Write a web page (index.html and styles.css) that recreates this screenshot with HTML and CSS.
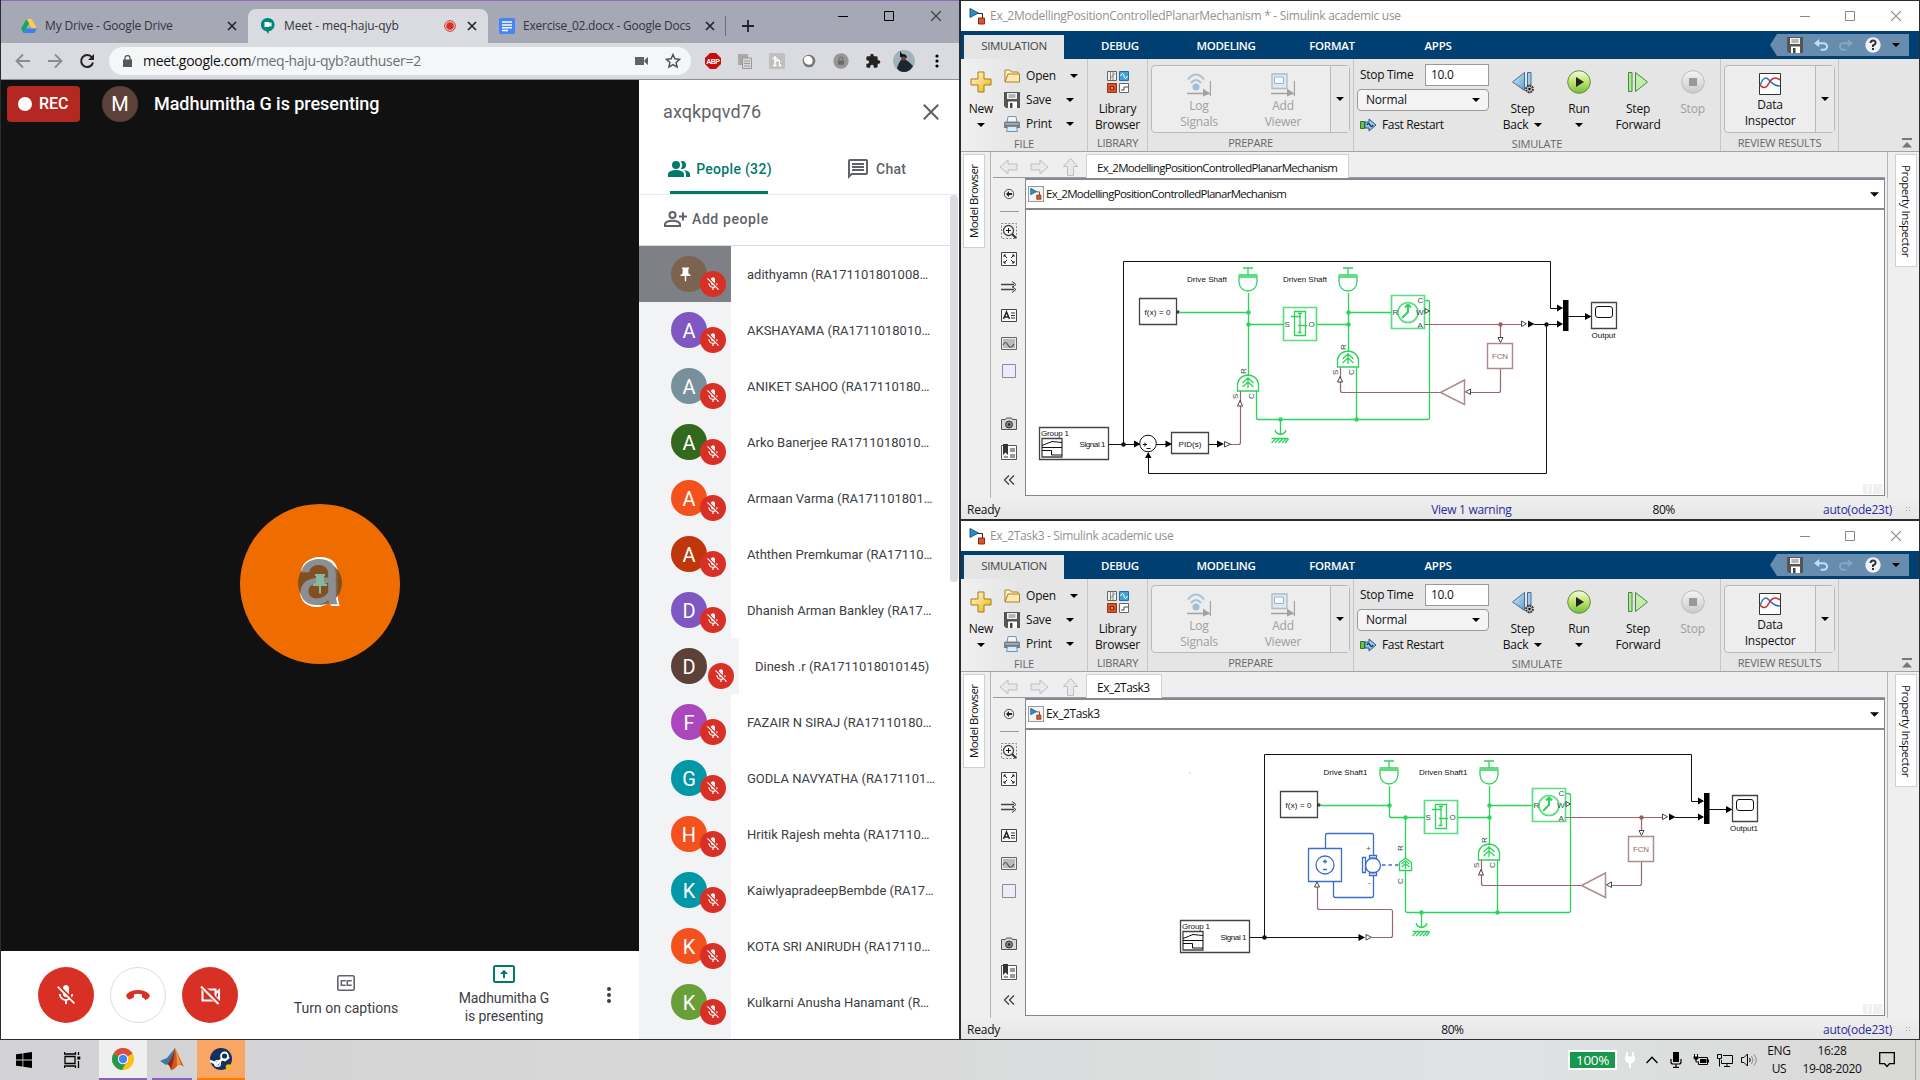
FILE: index.html
```html
<!DOCTYPE html>
<html lang="en">
<head>
<meta charset="utf-8">
<title>Desktop</title>
<link rel="stylesheet" href="styles.css">
</head>
<body>
<svg class="defs" width="0" height="0">
  <defs>
    <linearGradient id="gold" x1="0" y1="0" x2="1" y2="1"><stop offset="0" stop-color="#fffbe0"/><stop offset="1" stop-color="#eab308"/></linearGradient>
    <linearGradient id="green" x1="0" y1="0" x2="0" y2="1"><stop offset="0" stop-color="#f4fbe6"/><stop offset=".45" stop-color="#c5e774"/><stop offset="1" stop-color="#72bb3c"/></linearGradient>
    <linearGradient id="blue" x1="0" y1="0" x2="1" y2="1"><stop offset="0" stop-color="#d8effc"/><stop offset="1" stop-color="#5a9fd0"/></linearGradient>
    <linearGradient id="grey" x1="0" y1="0" x2="0" y2="1"><stop offset="0" stop-color="#f6f6f6"/><stop offset="1" stop-color="#c9c9c9"/></linearGradient>
  </defs>
  <symbol id="x" viewBox="0 0 10 10"><path d="M1 1l8 8M9 1l-8 8" fill="none" stroke="currentColor" stroke-width="var(--sw,1)"/></symbol>
  <symbol id="caret" viewBox="0 0 8 4"><path d="M0 0h8L4 4z"/></symbol>
  <symbol id="micoff" viewBox="0 0 24 24"><path fill="currentColor" d="M19 11h-1.700c0 .74-.16 1.430-.43 2.050l1.230 1.230c.56-.98.9-2.090.9-3.280zm-4.020.17c0-.06.02-.11.02-.17V5c0-1.660-1.340-3-3-3S9 3.340 9 5v.18l5.980 5.990zM4.270 3L3 4.270l6.010 6.010V11c0 1.660 1.330 3 2.990 3 .22 0 .44-.03.65-.08l1.660 1.660c-.71.33-1.500.52-2.310.52-2.760 0-5.300-2.100-5.300-5.100H5c0 3.410 2.720 6.230 6 6.720V21h2v-3.280c.91-.13 1.770-.45 2.540-.9L19.730 21 21 19.730 4.270 3z"/></symbol>
  <symbol id="pin" viewBox="0 0 24 24"><path fill="currentColor" d="M16 9V4h1V2H7v2h1v5c0 1.700-1.300 3-3 3v2h6v7l1 1 1-1v-7h6v-2c-1.700 0-3-1.300-3-3z"/></symbol>
  <symbol id="simulink" viewBox="0 0 17 17"><path d="M1 .5v9L9.500 5z" fill="#2b8cc4" stroke="#1c5f8c"/><path d="M9 5.500h4.500V10" fill="none" stroke="#222"/><path d="M9.500 10h6v6h-6z" fill="#d9532c" stroke="#8c2b10"/></symbol>
  <symbol id="plus" viewBox="0 0 22 22"><path d="M8 1h6v7h7v6h-7v7H8v-7H1V8h7z" fill="url(#gold)" stroke="#a87b14"/></symbol>
  <symbol id="folder" viewBox="0 0 16 14"><path d="M1 13V1h5l1.500 2H14v2" fill="#fff3c4" stroke="#a8822c"/><path d="M1 13L4 5h11.500v8z" fill="#fbe9ae" stroke="#a8822c"/></symbol>
  <symbol id="floppy" viewBox="0 0 16 16"><path d="M0 0h16v16H2l-2-2z" fill="#555"/><path d="M3 1h10v6H3z" fill="#f4f4f4"/><path d="M4.500 3h7M4.500 5h7" stroke="#777"/><path d="M4 9.500h9V16H4z" fill="#fff"/><path d="M6 11h2.500v5H6z" fill="#444"/></symbol>
  <symbol id="printer" viewBox="0 0 16 16"><path d="M4 .5h8l1 6H3z" fill="#eef6fc" stroke="#7c98ae"/><path d="M0 6.500q0-1 2-1h12q2 0 2 1V12H0z" fill="#777c83"/><path d="M1 8h14" stroke="#c9cdd2"/><path d="M3.500 10.500h9l1 5h-11z" fill="#d9ecf8" stroke="#6f93ae"/></symbol>
  <symbol id="library" viewBox="0 0 22 22"><path d="M.5.500h9v9h-9z" fill="#eee" stroke="#666"/><path d="M3.500 1v8M6 1v8M3 8l5-6" stroke="#888"/><path d="M12.500.5h9v9h-9z" fill="#3fa3db" stroke="#1d6fa5"/><path d="M13.500 5q2-5 3.500 0t3.500 0" fill="none" stroke="#fff"/><path d="M.5 12.500h9v9h-9z" fill="#d9532c" stroke="#9c3312"/><path d="M3.500 15.500h3v3h-3z" fill="#f0a080" stroke="#7c2408"/><path d="M12.500 12.500h9v9h-9z" fill="#fff" stroke="#666"/><path d="M14 19h3v-3h4" fill="none" stroke="#444"/></symbol>
  <symbol id="logsig" viewBox="0 0 24 24"><path d="M1 6.500Q9-3.500 17 6.500M4 10q5-6 10 0" fill="none" stroke="#a9c2d6" stroke-width="2.200"/><circle cx="9" cy="14" r="3.500" fill="#a3bdd3"/><path d="M0 20.500h23M23.500 8v15" stroke="#a2a2a2" stroke-width="1.300"/><path d="M16 15.500v8l7-3z" fill="#a2a2a2"/></symbol>
  <symbol id="viewer" viewBox="0 0 24 24"><path d="M1 1h15v14.500H1z" fill="#dfe8f0" stroke="#a9bccc" stroke-width="1.300"/><path d="M3.500 4h9v6.500h-9z" fill="#f4f8fb" stroke="#9cb2c6"/><path d="M0 20.500h23M23.500 8v15" stroke="#a2a2a2" stroke-width="1.300"/><path d="M16 15.500v8l7-3z" fill="#a2a2a2"/></symbol>
  <symbol id="restart" viewBox="0 0 17 14"><path d="M.5 3.500h4v7h-4z" fill="#6fbf4a" stroke="#38701c"/><path d="M5 4h4V1l7 6-7 6v-3H5z" fill="#9cc8e8" stroke="#225a86"/><path d="M7 7q1.500-3 3 0t3 0" fill="none" stroke="#123f66" stroke-width="1.500"/></symbol>
  <symbol id="stepback" viewBox="0 0 24 24"><path d="M13.500 2.500v18L1.500 12z" fill="url(#blue)" stroke="#4a6d8c"/><path d="M16.500 2.500h3.500v13h-3.500z" fill="#9ccdf0" stroke="#4a6d8c"/><circle cx="18.500" cy="19" r="3.400" fill="#ccc" stroke="#333" stroke-width="2" stroke-dasharray="1.800 .8"/><circle cx="18.500" cy="19" r="1.200"/></symbol>
  <symbol id="run" viewBox="0 0 24 24"><circle cx="12" cy="12" r="11.300" fill="url(#green)" stroke="#5f8f3e"/><path d="M9 7v10l8-5z" fill="#222"/></symbol>
  <symbol id="stepfwd" viewBox="0 0 24 24"><path d="M2.500 2.500h3.500v19H2.500z" fill="#b9e59a" stroke="#3f8a3a"/><path d="M9.500 2.500v19L21.500 12z" fill="#c3ebaa" stroke="#3f8a3a"/></symbol>
  <symbol id="stop" viewBox="0 0 24 24"><circle cx="12" cy="12" r="11.300" fill="url(#grey)" stroke="#bdbdbd"/><path d="M8 8h8v8H8z" fill="#999"/></symbol>
  <symbol id="inspector" viewBox="0 0 22 22"><path d="M.5.500h21v21H.5z" fill="#fdfdfd" stroke="#333"/><path d="M1 13q4-12 9-6t11 6" fill="none" stroke="#2b74b8" stroke-width="1.500"/><path d="M1 12q5 6 9-2t11-3" fill="none" stroke="#c8322c" stroke-width="1.500"/></symbol>
  <symbol id="undo" viewBox="0 0 16 14"><path d="M4 4.500h6.500a3.500 3.500 0 010 7H7" fill="none" stroke="currentColor" stroke-width="2.200"/><path d="M0 4.500L5.500 0v9z" fill="currentColor"/></symbol>
  <symbol id="help" viewBox="0 0 16 16"><circle cx="8" cy="8" r="7.700" fill="#eef2f6"/><path d="M5.500 6q0-2.500 2.600-2.500T10.600 6Q10.600 7.300 8 8.500V10M8 11v2" fill="none" stroke="#333" stroke-width="2"/></symbol>
  <symbol id="navarrow" viewBox="0 0 19 16"><path d="M1 8l8-7v4h9v6H9v4z" fill="#e9e9e9" stroke="#bdbdbd"/></symbol>

  <symbol id="p-back" viewBox="0 0 16 16"><circle cx="8" cy="8" r="4.700" fill="#eee" stroke="#555"/><path d="M5 8l3-3v2h3v2H8v2z" fill="#222"/></symbol>
  <symbol id="p-zoom" viewBox="0 0 16 16"><path d="M.5.500h15v15H.5z" fill="none" stroke="#888" stroke-dasharray="2 1.500"/><circle cx="7.500" cy="7.500" r="5" fill="#f8f8f8" stroke="#444" stroke-width="1.300"/><path d="M11 11l4 4" stroke="#333" stroke-width="2"/><path d="M5 7.500h5M7.500 5v5" stroke="#111"/></symbol>
  <symbol id="p-fit" viewBox="0 0 16 16"><path d="M.5 1.500h15v13H.5z" fill="#fafafa" stroke="#444"/><path d="M3 6V4h2M3 4l3 3M13 6V4h-2M13 4l-3 3M3 10v2h2M3 12l3-3M13 10v2h-2M13 12l-3-3" fill="none" stroke="#222"/></symbol>
  <symbol id="p-arrows" viewBox="0 0 16 16"><path d="M0 5.500h13M0 10.500h13" stroke="#444" stroke-width="1.300"/><path d="M11 2.500l4 3-4 3M11 7.500l4 3-4 3" fill="none" stroke="#444"/></symbol>
  <symbol id="p-note" viewBox="0 0 16 16"><path d="M.5 2.500h15v12H.5z" fill="#fafafa" stroke="#444"/><path d="M10 6h4M10 8.500h4M10 11h4" stroke="#333"/><path d="M2.500 12L5.500 5l3 7M3.500 10h4" fill="none" stroke="#222" stroke-width="1.500"/></symbol>
  <symbol id="p-image" viewBox="0 0 16 16"><path d="M.5 2.500h15v12H.5z" fill="#eee" stroke="#666"/><path d="M2 4h12v9H2z" fill="#bbb"/><path d="M2 10q2.500-5 5 0t6-1" fill="none" stroke="#555" stroke-width="1.200"/></symbol>
  <symbol id="p-area" viewBox="0 0 16 16"><path d="M1.500 1.500h13v13h-13z" fill="#ebebfa" stroke="#8a8aa0"/></symbol>
  <symbol id="p-camera" viewBox="0 0 16 16"><path d="M.5 3.500h4l1-1.500h5l1 1.500h4v10H.5z" fill="#d8d8d8" stroke="#555"/><circle cx="8" cy="8.500" r="3.500" fill="#888" stroke="#333"/><circle cx="8" cy="8.500" r="1.300" fill="#222"/></symbol>
  <symbol id="p-book" viewBox="0 0 16 16"><path d="M.5 1.500h15v14H.5z" fill="#fafafa" stroke="#555"/><path d="M2 0h5v11L4.500 8.500 2 11z" fill="#333"/><path d="M9 4h5v4H9zM9 10h5v4H9zM3 12h4v2H3z" fill="#999"/></symbol>
  <symbol id="p-collapse" viewBox="0 0 16 16"><path d="M8 3.500L3.500 8 8 12.500M13 3.500L8.500 8l4.500 4.500" fill="none" stroke="#444" stroke-width="1.300"/></symbol>

  <!-- blocks and wires that both models share -->
  <symbol id="shaft" viewBox="0 0 24 28" overflow="visible"><path class="g" d="M7 1.500h10M12 1.500v7M2.500 8.500h19M3 10.500h18v5q-1 8.500-9 9-8-.5-9-9z"/></symbol>
  <symbol id="source" viewBox="0 0 24 20" overflow="visible"><path class="g" d="M1.500 16.500h21V9q-2-8-10.500-8.500Q3.500 1 1.500 9zM12 13.500V4M6.500 8.500l5.500-5 5.500 5M6.500 12.500l5.500-5 5.500 5"/></symbol>
  <symbol id="common" overflow="visible">
    <path class="k" d="M1108.500 444.500H1123.500V261.500H1550.500V308.500H1557M1568 316.500H1586M1534 324.500H1558"/>
    <path class="kf" d="M1557 304.500v7l6-3.500zM1557 320.500v7l6-3.500zM1585 313v7l6.500-3.500zM1528 320.500v7l6.500-3.500zM1563 300h5.500v31h-5.500z"/>
    <circle cx="1123.500" cy="444.500" r="2.300"/>
    <path class="b" d="M1039.500 427.500h69v32h-69zM1042 438.500h20v18.500h-20z"/>
    <path class="k" d="M1042 445.500l10-4 10 1M1042 447.500h20M1042 450.500h9.500v4.500h10.500"/>
    <path class="b" d="M1139.500 298.500h37v26h-37zM1591.500 302.500h25v26h-25z"/>
    <rect class="k" x="1595.500" y="306.500" width="17" height="11" rx="2.500"/>
    <path class="k" d="M1177 311h2v2h-2z"/>
    <text x="1041" y="436" textLength="28">Group 1</text>
    <text x="1079.500" y="446.500" textLength="26">Signal 1</text>
    <text x="1144.500" y="315" textLength="26">f(x) = 0</text>
    <path class="g" d="M1179 312.500H1248.500M1316.500 324.500H1348.500M1348.500 293V351M1348.500 312.500H1392M1356.500 367.500V419.500M1280.500 419.500H1427.500q2 0 2-2V302.500q0-2-2-2H1424.500M1280.500 419.500V434.500M1275 430q1 4 5.500 4.500 4.500-.5 5.500-4.500M1271.500 438.500h17M1271.500 443l4-4M1275 443l4-4M1278.500 443l4-4M1282 443l4-4M1285 443l3.500-4"/>
    <path class="gb" d="M1283.500 307.500h33v33h-33zM1391.500 295.500h33v33h-33z"/>
    <path class="g" d="M1294.500 311.500h11v24h-11zM1291 316.500h10M1298 325.500h9M1298 313.500h4M1300 313.500v19M1297.500 332.500h4"/>
    <circle class="gb" cx="1408" cy="312.500" r="10"/>
    <path class="g thick" d="M1402 318l6-6v-8M1405 307.500l3-3 3 3"/>
    <g class="gf"><circle cx="1248.500" cy="312.500" r="2.200"/><circle cx="1348.500" cy="312.500" r="2.200"/><circle cx="1348.500" cy="324.500" r="2.200"/><circle cx="1280.500" cy="419.500" r="2.200"/><circle cx="1356.500" cy="419.500" r="2.200"/></g>
    <use href="#shaft" x="1236" y="266.500" width="24" height="28"/>
    <use href="#shaft" x="1336" y="266.500" width="24" height="28"/>
    <use href="#source" x="1336" y="350.500" width="24" height="20"/>
    <g class="t"><text x="1284.500" y="327">S</text><text x="1308.500" y="327">O</text><text x="1392.500" y="315">R</text><text x="1417.500" y="303">C</text><text x="1416" y="315">W</text><text x="1417.500" y="327.500">A</text>
    <text transform="translate(1346 350) rotate(-90)">R</text><text transform="translate(1338 375) rotate(-90)">S</text><text transform="translate(1353.500 375) rotate(-90)">C</text></g>
    <path class="m" d="M1424.500 324.500H1521M1500.500 324.500V338M1500.500 368V390.500q0 2-2 2H1470M1440 392.500H1342.500q-2 0-2-2V367.500"/>
    <path class="mb" d="M1487.500 343.500h25v25h-25zM1464.500 380l-24 12.500 24 12z"/>
    <circle cx="1500.500" cy="324.500" r="2.200" fill="#9a5f63"/>
    <text class="fcn" x="1492" y="359" textLength="16">FCN</text>
    <path class="o" d="M1425 308.500v5l4.500-2.500zM1521.500 321v5.500l5-2.700zM1498 337.500h5l-2.500 5zM1470.500 389v5.500l-5-2.700zM1337.500 382h5l-2.500-5.500z"/>
  </symbol>
</svg>

<main class="desktop">
<div class="windows">

<section class="chrome">
  <header class="tabstrip">
    <div class="tab t1"><svg width="16" height="15" viewBox="0 0 16 15"><path d="M5.500 0h5l5.500 9.500h-5z" fill="#ffcf48"/><path d="M5.500 0L0 9.500 2.600 14 8 4.500z" fill="#11a861"/><path d="M5.200 9.500H16L13.400 14H2.600z" fill="#3c7ff0"/></svg><span>My Drive - Google Drive</span><svg class="close" width="10" height="10"><use href="#x"/></svg></div>
    <div class="tab t2"><svg width="14" height="16" viewBox="0 0 14 16"><path d="M7 0a6.700 6.700 0 011 13.300L7 16l-1.500-2.700A6.700 6.700 0 017 0z" fill="#00897b"/><path d="M3.500 4h5v1.500l2-1.200v4.500l-2-1.200V9h-5z" fill="#fff"/></svg><span>Meet - meq-haju-qyb</span><svg class="rec" width="12" height="12"><circle cx="6" cy="6" r="5.300" fill="none" stroke="#d93025"/><circle cx="6" cy="6" r="3.800" fill="#d93025"/></svg><svg class="close" width="10" height="10"><use href="#x"/></svg></div>
    <div class="tab t3"><svg width="16" height="16" viewBox="0 0 16 16"><rect width="16" height="16" rx="1.500" fill="#4285f4"/><path d="M3 4h10M3 7h10M3 9.800h10M3 12.500h6" stroke="#fff" stroke-width="1.500"/></svg><span>Exercise_02.docx - Google Docs</span><svg class="close" width="10" height="10"><use href="#x"/></svg></div>
    <svg class="newtab" width="12" height="12" viewBox="0 0 12 12"><path d="M0 6h12M6 0v12" stroke="#222" stroke-width="1.800"/></svg>
    <div class="winbtns"><svg width="10" height="10"><path d="M0 5.500h10" stroke="#000"/></svg><svg width="10" height="10"><path d="M.5.500h9v9h-9z" fill="none" stroke="#000"/></svg><svg width="12" height="12"><use href="#x"/></svg></div>
  </header>
  <div class="toolbar">
    <svg width="16" height="16" viewBox="0 0 16 16"><path d="M15 8H2M8 1.500L1.500 8 8 14.500" fill="none" stroke="#8b8c91" stroke-width="1.800"/></svg>
    <svg width="16" height="16" viewBox="0 0 16 16"><path d="M1 8h13M8 1.500L14.500 8 8 14.500" fill="none" stroke="#8b8c91" stroke-width="1.800"/></svg>
    <svg width="16" height="16" viewBox="0 0 16 16"><path d="M13 4.500A6 6 0 1014 9.500" fill="none" stroke="#222" stroke-width="2"/><path d="M15 1v6H9z" fill="#222"/></svg>
    <div class="omnibox"><svg width="9" height="12" viewBox="0 0 9 12"><path d="M0 4.500h9V12H0z" fill="#55585c"/><path d="M2 5V3a2.500 2.500 0 015 0v2" fill="none" stroke="#55585c" stroke-width="1.300"/></svg><span class="url">meet.google.com<i>/meq-haju-qyb?authuser=2</i></span>
      <svg width="13" height="10" viewBox="0 0 13 10"><path d="M0 1h9v8H0zM9.500 4L13 1v8L9.500 6z" fill="#5f6368"/></svg>
      <svg class="star" width="16" height="16" viewBox="0 0 16 16"><path d="M8 1.500l1.900 4.300 4.700.5-3.500 3.100 1 4.600L8 11.600 3.900 14l1-4.600L1.400 6.300l4.700-.5z" fill="none" stroke="#4a4d51" stroke-width="1.400"/></svg></div>
    <div class="exts">
      <svg width="16" height="16" viewBox="0 0 16 16"><path d="M5 0h6l5 5v6l-5 5H5l-5-5V5z" fill="#c70d0d"/><text x="1.200" y="10.800" textLength="13.600" class="abp">ABP</text></svg>
      <svg width="16" height="16" viewBox="0 0 16 16"><path d="M1 1h10v11H1z" fill="#aaa"/><path d="M5.500 5h9v10.500h-9z" fill="#d8d8da" stroke="#999"/><path d="M7 8h6M7 10.500h6M7 13h6" stroke="#999"/></svg>
      <svg width="16" height="16" viewBox="0 0 16 16"><rect width="16" height="16" rx="1.500" fill="#bfbfbf"/><path d="M6 3v9.500M4 12.500h3.500M3.500 5.500h5M6 9q4.500-4 4.500 0v3.500h2" fill="none" stroke="#fff" stroke-width="1.400"/></svg>
      <svg width="16" height="16" viewBox="0 0 16 16"><circle cx="8" cy="8" r="5" fill="#f6f6f6" stroke="#777" stroke-width="2.600"/><circle cx="7" cy="7" r="4" fill="#fff"/></svg>
      <svg width="16" height="16" viewBox="0 0 16 16"><circle cx="8" cy="8" r="7.700" fill="#969696"/><path d="M5 7.500h6v4.200H5z" fill="#6a6a6a"/><path d="M6.200 7.500V5.800a1.800 1.800 0 013.600 0v1.700" fill="none" stroke="#6a6a6a"/></svg>
      <svg width="16" height="16" viewBox="0 0 24 24"><path d="M20.500 11H19V7a2 2 0 00-2-2h-4V3.500a2.500 2.500 0 00-5 0V5H4a2 2 0 00-2 2v3.800h1.500a2.700 2.700 0 010 5.400H2V20a2 2 0 002 2h3.800v-1.500a2.700 2.700 0 015.400 0V22H17a2 2 0 002-2v-4h1.500a2.500 2.500 0 000-5z" fill="#222"/></svg>
      <svg width="22" height="22" viewBox="0 0 22 22"><circle cx="11" cy="11" r="11" fill="#9fb3bb"/><path d="M6 13l2-3h5l3 2 4 4q-3.500 6-9 6-5 0-7-4z" fill="#1d2433"/><circle cx="10.500" cy="8" r="2.500" fill="#6b4637"/><path d="M7 7V1l2 3q5 0 5 4l-3-1.500z" fill="#111"/></svg>
      <svg width="4" height="14" viewBox="0 0 4 14"><circle cx="2" cy="2" r="1.600"/><circle cx="2" cy="7" r="1.600"/><circle cx="2" cy="12" r="1.600"/></svg>
    </div>
  </div>
  <div class="meet">
    <div class="stage">
      <div class="video">
        <div class="caption"><div class="recbadge"><b></b>REC</div><div class="initial">M</div><span>Madhumitha G is presenting</span></div>
        <div class="bigavatar"><span class="letter">a</span><span class="shade"></span><span class="letter over">a</span><svg class="bigpin" width="14" height="20" viewBox="5 2 14 20" preserveAspectRatio="none"><use href="#pin" width="24" height="24"/></svg></div>
      </div>
      <div class="controls">
        <div class="round red"><svg width="24" height="24"><use href="#micoff"/></svg></div>
        <div class="round hang"><svg width="24" height="10" viewBox="0 0 24 10"><path d="M12 0C5 0 .5 3.500.2 5.500 0 7 2.500 9.500 3.500 9.500S8 7.500 8 6.800V4.300Q12 3 16 4.300v2.500c0 .7 3.500 2.700 4.500 2.700S24 7 23.800 5.500C23.500 3.500 19 0 12 0z" fill="#d93025"/></svg></div>
        <div class="round red"><svg width="24" height="24" viewBox="0 0 24 24"><path d="M4.500 6.500v11h13v-11zM17.500 10.500L21 7.500v9l-3.500-3" fill="none" stroke="#fff" stroke-width="2"/><path d="M4 3.500l17 17" stroke="#d93025" stroke-width="5"/><path d="M3 3.500l17.500 17.500" stroke="#fff" stroke-width="2"/></svg></div>
        <div class="action cc"><svg width="18" height="16" viewBox="0 0 18 16"><rect x=".8" y=".8" width="16.400" height="14.400" rx="1.500" fill="none" stroke="#5f6368" stroke-width="1.600"/><path d="M8 6.500V5.700H4.300v4.600H8v-.8M14 6.500V5.700h-3.700v4.600H14v-.8" fill="none" stroke="#5f6368" stroke-width="1.500"/></svg><span>Turn on captions</span></div>
        <div class="action pr"><svg width="22" height="18" viewBox="0 0 22 18"><rect x="1" y="1" width="20" height="16" rx="1.500" fill="none" stroke="#00796b" stroke-width="2"/><path d="M11 13V7" stroke="#00796b" stroke-width="2"/><path d="M7 9l4-4.300L15 9z" fill="#00796b"/></svg><span>Madhumitha G<br>is presenting</span></div>
        <svg class="more" width="4" height="16" viewBox="0 0 4 16"><circle cx="2" cy="2" r="2"/><circle cx="2" cy="8" r="2"/><circle cx="2" cy="14" r="2"/></svg>
      </div>
    </div>
    <aside class="panel">
      <div class="ptitle"><span>axqkpqvd76</span><svg width="18" height="18"><use href="#x"/></svg></div>
      <div class="ptabs">
        <div class="pt on"><svg width="22" height="16" viewBox="1 4 22 16"><path d="M16.700 13.100c1.400 1 2.300 2.200 2.300 3.900v3h4v-3c0-2.200-3.600-3.500-6.300-3.900zM15 12a4 4 0 000-8c-.5 0-.9.100-1.300.2a6 6 0 010 7.600c.4.100.8.200 1.300.2zM9 4a4 4 0 100 8 4 4 0 000-8zm0 9c-2.700 0-8 1.300-8 4v3h16v-3c0-2.700-5.300-4-8-4z" fill="#00796b"/></svg>People (32)</div>
        <div class="pt chat"><svg width="20" height="20" viewBox="2 2 20 20"><path d="M4 4h16v12H5.200L4 17.200zM4 2a2 2 0 00-2 2v18l4-4h14a2 2 0 002-2V4a2 2 0 00-2-2zM6 12h12v2H6zm0-3h12v2H6zm0-3h12v2H6z" fill="#5f6368" fill-rule="evenodd"/></svg>Chat</div>
      </div>
      <div class="add"><svg width="23" height="16" viewBox="0 0 23 16"><circle cx="8.500" cy="4" r="3" fill="none" stroke="#5f6368" stroke-width="2"/><path d="M1 15v-2q1-3.200 7.500-3.200T16 13v2zM15 5.500h8M19 1.500v8" fill="none" stroke="#5f6368" stroke-width="2"/></svg>Add people</div>
      <ul class="people">
        <li class="pinned"><b class="c0"><svg width="17" height="17"><use href="#pin"/></svg></b><i><svg width="16" height="16"><use href="#micoff"/></svg></i><span>adithyamn (RA171101801008…</span></li>
        <li><b class="violet">A</b><i><svg width="16" height="16"><use href="#micoff"/></svg></i><span>AKSHAYAMA (RA1711018010…</span></li>
        <li><b class="slate">A</b><i><svg width="16" height="16"><use href="#micoff"/></svg></i><span>ANIKET SAHOO (RA17110180…</span></li>
        <li><b class="forest">A</b><i><svg width="16" height="16"><use href="#micoff"/></svg></i><span>Arko Banerjee RA1711018010…</span></li>
        <li><b class="orange">A</b><i><svg width="16" height="16"><use href="#micoff"/></svg></i><span>Armaan Varma (RA171101801…</span></li>
        <li><b class="rust">A</b><i><svg width="16" height="16"><use href="#micoff"/></svg></i><span>Aththen Premkumar (RA17110…</span></li>
        <li><b class="violet">D</b><i><svg width="16" height="16"><use href="#micoff"/></svg></i><span>Dhanish Arman Bankley (RA17…</span></li>
        <li class="wide"><b class="brown">D</b><i><svg width="16" height="16"><use href="#micoff"/></svg></i><span>Dinesh .r (RA1711018010145)</span></li>
        <li><b class="purple">F</b><i><svg width="16" height="16"><use href="#micoff"/></svg></i><span>FAZAIR N SIRAJ (RA17110180…</span></li>
        <li><b class="teal">G</b><i><svg width="16" height="16"><use href="#micoff"/></svg></i><span>GODLA NAVYATHA (RA171101…</span></li>
        <li><b class="orange">H</b><i><svg width="16" height="16"><use href="#micoff"/></svg></i><span>Hritik Rajesh mehta (RA17110…</span></li>
        <li><b class="teal">K</b><i><svg width="16" height="16"><use href="#micoff"/></svg></i><span>KaiwlyapradeepBembde (RA17…</span></li>
        <li><b class="orange">K</b><i><svg width="16" height="16"><use href="#micoff"/></svg></i><span>KOTA SRI ANIRUDH (RA17110…</span></li>
        <li><b class="lime">K</b><i><svg width="16" height="16"><use href="#micoff"/></svg></i><span>Kulkarni Anusha Hanamant (R…</span></li>
      </ul>
      <div class="thumb"></div>
    </aside>
  </div>
</section>

<div class="models">
<section class="sim">
  <header class="title"><svg width="17" height="17"><use href="#simulink"/></svg><span>Ex_2ModellingPositionControlledPlanarMechanism * - Simulink academic use</span><div class="simbtns"><svg width="10" height="10"><path d="M0 5.500h10" stroke="#888"/></svg><svg width="10" height="10"><path d="M.5.500h9v9h-9z" fill="none" stroke="#888"/></svg><svg width="12" height="12"><use href="#x"/></svg></div></header>
  <nav class="ribbon"><a class="on">SIMULATION</a><a>DEBUG</a><a>MODELING</a><a>FORMAT</a><a>APPS</a><div class="quick"><svg width="16" height="16"><use href="#floppy"/></svg><svg class="un" width="15" height="13"><use href="#undo"/></svg><svg class="re" width="15" height="13"><use href="#undo"/></svg><svg width="16" height="16"><use href="#help"/></svg><svg width="8" height="4"><use href="#caret"/></svg></div></nav>
  <div class="strip">
    <div class="sec file"><div class="in"><div class="big new"><svg width="22" height="22"><use href="#plus"/></svg><span>New</span><svg width="8" height="4"><use href="#caret"/></svg></div>
      <div class="rows"><div><svg width="16" height="14"><use href="#folder"/></svg><span>Open</span><svg class="c far" width="8" height="4"><use href="#caret"/></svg></div><div><svg width="16" height="16"><use href="#floppy"/></svg><span>Save</span><svg class="c" width="8" height="4"><use href="#caret"/></svg></div><div><svg width="16" height="16"><use href="#printer"/></svg><span>Print</span><svg class="c" width="8" height="4"><use href="#caret"/></svg></div></div></div><h6>FILE</h6></div>
    <div class="sec lib"><div class="in"><div class="big"><svg width="22" height="22"><use href="#library"/></svg><span>Library<br>Browser</span></div></div><h6>LIBRARY</h6></div>
    <div class="sec prep"><div class="in"><div class="gal"><div class="big dim"><svg width="24" height="24"><use href="#logsig"/></svg><span>Log<br>Signals</span></div><div class="big dim"><svg width="24" height="24"><use href="#viewer"/></svg><span>Add<br>Viewer</span></div><div class="drop"><svg width="8" height="4"><use href="#caret"/></svg></div></div></div><h6>PREPARE</h6></div>
    <div class="sec simu"><div class="in"><div class="form"><div class="st"><span>Stop Time</span><div class="inp">10.0</div></div><div class="sel">Normal<svg width="8" height="4"><use href="#caret"/></svg></div><div class="fr"><svg width="17" height="14"><use href="#restart"/></svg><span>Fast Restart</span></div></div>
      <div class="big sb"><svg width="24" height="24"><use href="#stepback"/></svg><span>Step<br>Back <svg width="8" height="4"><use href="#caret"/></svg></span></div><div class="big rn"><svg width="24" height="24"><use href="#run"/></svg><span>Run</span><svg class="cc2" width="8" height="4"><use href="#caret"/></svg></div><div class="big sf"><svg width="24" height="24"><use href="#stepfwd"/></svg><span>Step<br>Forward</span></div><div class="big dim sp"><svg width="24" height="24"><use href="#stop"/></svg><span>Stop</span></div></div><h6>SIMULATE</h6></div>
    <div class="sec rev"><div class="in"><div class="gal"><div class="big"><svg width="22" height="22"><use href="#inspector"/></svg><span>Data<br>Inspector</span></div><div class="drop"><svg width="8" height="4"><use href="#caret"/></svg></div></div></div><h6>REVIEW RESULTS</h6></div>
    <svg class="fold" width="10" height="10" viewBox="0 0 10 10"><path d="M0 0h10v2H0zM5 4l5 5.500H0z" fill="#777"/></svg>
  </div>
  <div class="body">
    <div class="side left"><div class="vtab up">Model Browser</div></div>
    <div class="editor">
      <div class="doctabs"><div class="nav"><svg width="19" height="16"><use href="#navarrow"/></svg><svg class="flip" width="19" height="16"><use href="#navarrow"/></svg><svg class="upw" width="19" height="16"><use href="#navarrow"/></svg></div><div class="doc long">Ex_2ModellingPositionControlledPlanarMechanism</div></div>
      <div class="work">
        <div class="palette"><svg width="16" height="16"><use href="#p-back"/></svg><hr><svg width="16" height="16"><use href="#p-zoom"/></svg><svg width="16" height="16"><use href="#p-fit"/></svg><svg width="16" height="16"><use href="#p-arrows"/></svg><svg width="16" height="16"><use href="#p-note"/></svg><svg width="16" height="16"><use href="#p-image"/></svg><svg class="gap" width="16" height="16"><use href="#p-area"/></svg><svg width="16" height="16"><use href="#p-camera"/></svg><svg width="16" height="16"><use href="#p-book"/></svg><svg width="16" height="16"><use href="#p-collapse"/></svg></div>
        <div class="view">
          <div class="crumb"><span class="ic"><svg width="12" height="12"><use href="#simulink"/></svg></span><span class="long">Ex_2ModellingPositionControlledPlanarMechanism</span><svg class="cr" width="9" height="5"><use href="#caret"/></svg></div>
          <svg class="canvas" width="858" height="285" viewBox="1026 210 858 285">
            <use href="#common"/>
            <text x="1187" y="282" textLength="40">Drive Shaft</text><text x="1283" y="282" textLength="44">Driven Shaft</text><text x="1591.500" y="338" textLength="24">Output</text>
            <path class="g" d="M1248.500 293V375M1248.500 324.500H1284M1256.500 391V417.500q0 2 2 2H1281"/><circle class="gf" cx="1248.500" cy="324.500" r="2.200"/>
            <use href="#source" x="1236" y="374.500" width="24" height="20"/>
            <g class="t"><text transform="translate(1246 374) rotate(-90)">R</text><text transform="translate(1238 399) rotate(-90)">S</text><text transform="translate(1253.500 399) rotate(-90)">C</text></g>
            <path class="m" d="M1230 444.500H1238.500q2 0 2-2V391"/><path class="o" d="M1237.500 406h5l-2.500-5.500zM1224.500 441.500v5.500l6-2.700z"/>
            <path class="k" d="M1123 444.500H1135M1156 444.500H1167M1208 444.500H1218M1546.500 324.500V473.500H1148.500V457"/><circle class="k" cx="1148" cy="443.500" r="8.300"/>
            <path class="b" d="M1171.500 432.500h37v21h-37z"/><path class="kf" d="M1134 440.500v7l6.500-3.500zM1165.500 440.500v7l6.500-3.500zM1217 440.500v7l7-3.500zM1145 458h6.500l-3.200-6z"/><circle cx="1546.500" cy="324.500" r="2.200"/>
            <path class="k" d="M1143 444.500h4M1145 442.500v4M1146.500 448.500h4"/><text x="1178.500" y="446.500" textLength="23">PID(s)</text>
            <path d="M1863 484h4v10h-4zM1868 484h4v10h-4zM1873 484h10v10h-10z" fill="#f1f1f1"/>
          </svg>
        </div>
      </div>
    </div>
    <div class="side right"><div class="vtab">Property Inspector</div></div>
  </div>
  <footer class="status"><span>Ready</span><span class="warn link">View 1 warning</span><span class="pct">80%</span><span class="solver link">auto(ode23t)</span><i class="grip"></i></footer>
</section>

<section class="sim second">
  <header class="title"><svg width="17" height="17"><use href="#simulink"/></svg><span>Ex_2Task3 - Simulink academic use</span><div class="simbtns"><svg width="10" height="10"><path d="M0 5.500h10" stroke="#888"/></svg><svg width="10" height="10"><path d="M.5.500h9v9h-9z" fill="none" stroke="#888"/></svg><svg width="12" height="12"><use href="#x"/></svg></div></header>
  <nav class="ribbon"><a class="on">SIMULATION</a><a>DEBUG</a><a>MODELING</a><a>FORMAT</a><a>APPS</a><div class="quick"><svg width="16" height="16"><use href="#floppy"/></svg><svg class="un" width="15" height="13"><use href="#undo"/></svg><svg class="re" width="15" height="13"><use href="#undo"/></svg><svg width="16" height="16"><use href="#help"/></svg><svg width="8" height="4"><use href="#caret"/></svg></div></nav>
  <div class="strip">
    <div class="sec file"><div class="in"><div class="big new"><svg width="22" height="22"><use href="#plus"/></svg><span>New</span><svg width="8" height="4"><use href="#caret"/></svg></div>
      <div class="rows"><div><svg width="16" height="14"><use href="#folder"/></svg><span>Open</span><svg class="c far" width="8" height="4"><use href="#caret"/></svg></div><div><svg width="16" height="16"><use href="#floppy"/></svg><span>Save</span><svg class="c" width="8" height="4"><use href="#caret"/></svg></div><div><svg width="16" height="16"><use href="#printer"/></svg><span>Print</span><svg class="c" width="8" height="4"><use href="#caret"/></svg></div></div></div><h6>FILE</h6></div>
    <div class="sec lib"><div class="in"><div class="big"><svg width="22" height="22"><use href="#library"/></svg><span>Library<br>Browser</span></div></div><h6>LIBRARY</h6></div>
    <div class="sec prep"><div class="in"><div class="gal"><div class="big dim"><svg width="24" height="24"><use href="#logsig"/></svg><span>Log<br>Signals</span></div><div class="big dim"><svg width="24" height="24"><use href="#viewer"/></svg><span>Add<br>Viewer</span></div><div class="drop"><svg width="8" height="4"><use href="#caret"/></svg></div></div></div><h6>PREPARE</h6></div>
    <div class="sec simu"><div class="in"><div class="form"><div class="st"><span>Stop Time</span><div class="inp">10.0</div></div><div class="sel">Normal<svg width="8" height="4"><use href="#caret"/></svg></div><div class="fr"><svg width="17" height="14"><use href="#restart"/></svg><span>Fast Restart</span></div></div>
      <div class="big sb"><svg width="24" height="24"><use href="#stepback"/></svg><span>Step<br>Back <svg width="8" height="4"><use href="#caret"/></svg></span></div><div class="big rn"><svg width="24" height="24"><use href="#run"/></svg><span>Run</span><svg class="cc2" width="8" height="4"><use href="#caret"/></svg></div><div class="big sf"><svg width="24" height="24"><use href="#stepfwd"/></svg><span>Step<br>Forward</span></div><div class="big dim sp"><svg width="24" height="24"><use href="#stop"/></svg><span>Stop</span></div></div><h6>SIMULATE</h6></div>
    <div class="sec rev"><div class="in"><div class="gal"><div class="big"><svg width="22" height="22"><use href="#inspector"/></svg><span>Data<br>Inspector</span></div><div class="drop"><svg width="8" height="4"><use href="#caret"/></svg></div></div></div><h6>REVIEW RESULTS</h6></div>
    <svg class="fold" width="10" height="10" viewBox="0 0 10 10"><path d="M0 0h10v2H0zM5 4l5 5.500H0z" fill="#777"/></svg>
  </div>
  <div class="body">
    <div class="side left"><div class="vtab up">Model Browser</div></div>
    <div class="editor">
      <div class="doctabs"><div class="nav"><svg width="19" height="16"><use href="#navarrow"/></svg><svg class="flip" width="19" height="16"><use href="#navarrow"/></svg><svg class="upw" width="19" height="16"><use href="#navarrow"/></svg></div><div class="doc">Ex_2Task3</div></div>
      <div class="work">
        <div class="palette"><svg width="16" height="16"><use href="#p-back"/></svg><hr><svg width="16" height="16"><use href="#p-zoom"/></svg><svg width="16" height="16"><use href="#p-fit"/></svg><svg width="16" height="16"><use href="#p-arrows"/></svg><svg width="16" height="16"><use href="#p-note"/></svg><svg width="16" height="16"><use href="#p-image"/></svg><svg class="gap" width="16" height="16"><use href="#p-area"/></svg><svg width="16" height="16"><use href="#p-camera"/></svg><svg width="16" height="16"><use href="#p-book"/></svg><svg width="16" height="16"><use href="#p-collapse"/></svg></div>
        <div class="view">
          <div class="crumb"><span class="ic"><svg width="12" height="12"><use href="#simulink"/></svg></span><span>Ex_2Task3</span><svg class="cr" width="9" height="5"><use href="#caret"/></svg></div>
          <svg class="canvas" width="858" height="285" viewBox="1026 730 858 285">
            <use href="#common" x="141" y="493"/>
            <text x="1323.500" y="775" textLength="44">Drive Shaft1</text><text x="1419" y="775" textLength="48.500">Driven Shaft1</text><text x="1730" y="831" textLength="28">Output1</text>
            <path class="g" d="M1389.500 786V815.500q0 2 2 2H1425M1405.500 817.500V858M1405.500 870V910.500q0 2 2 2H1422M1399.500 870.500v-8l6-4.500 6 4.500v8zM1401.500 864l4-3.500 4 3.500M1401.500 867l4-3.500 4 3.500M1405.500 869v-7"/><circle class="gf" cx="1405.500" cy="817.500" r="2.200"/>
            <g class="t"><text transform="translate(1403 851) rotate(-90)">R</text><text transform="translate(1403 884) rotate(-90)">C</text><text x="1366" y="850.500">+</text><text x="1368" y="885">-</text></g>
            <g class="u"><path d="M1308.500 848.500h33v33h-33zM1325.500 848.500V835.500q0-2 2-2H1371.500q2 0 2 2V855M1333.500 881.500V895.500q0 2 2 2H1371.500q2 0 2-2V875M1369.500 855.500h7v3h-7zM1369.500 872.500h7v3h-7zM1362.500 857.500h3v15h-3zM1323 861.500h4M1325 859.500v4M1323 869.500h4"/><circle cx="1325" cy="865" r="9"/><circle cx="1373" cy="865.500" r="7.500"/><path d="M1382 865h17" stroke-dasharray="3.500 3" stroke-width="1.600"/></g>
            <path class="m" d="M1317.500 887V907.500q0 2 2 2H1390.500q2 0 2 2V935.500q0 2-2 2H1372"/><path class="o" d="M1314.500 887h5l-2.500-5zM1366 934.500v5.500l5.500-2.700z"/>
            <path class="k" d="M1264 937.500H1359"/><path class="kf" d="M1358.500 934v7l6.500-3.500z"/><path d="M1189 772h2v2h-2z" fill="#d5eafa"/>
            <path d="M1863 1004h4v10h-4zM1868 1004h4v10h-4zM1873 1004h10v10h-10z" fill="#f1f1f1"/>
          </svg>
        </div>
      </div>
    </div>
    <div class="side right"><div class="vtab">Property Inspector</div></div>
  </div>
  <footer class="status"><span>Ready</span><span class="pct">80%</span><span class="solver link">auto(ode23t)</span><i class="grip"></i></footer>
</section>
</div>
</div>

<footer class="taskbar">
  <div class="app"><svg width="16" height="16" viewBox="0 0 16 16"><path d="M0 2.300l6.500-.9v6.200H0zM7.300 1.300L16 0v7.600H7.300zM0 8.400h6.500v6.200L0 13.700zM7.300 8.400H16V16l-8.700-1.300z"/></svg></div>
  <div class="app"><svg width="17" height="16" viewBox="0 0 17 16"><path d="M1 4.500h10v7H1zM.5 0v2h11V0M.5 16v-2h11v2M14.500 0v3M14.500 9v7" fill="none" stroke="#000" stroke-width="1.300"/><path d="M13.300 4.500h3v3h-3z"/></svg></div>
  <div class="app open"><svg width="22" height="22" viewBox="0 0 22 22"><circle cx="11" cy="11" r="11" fill="#fbc116"/><path d="M11 11L1.500 5.500A11 11 0 0120.500 5.500z" fill="#dd4b3e"/><path d="M1.500 5.500A11 11 0 0010 22l5-9-4-2z" fill="#24994b"/><circle cx="11" cy="11" r="5.200" fill="#fff"/><circle cx="11" cy="11" r="4.200" fill="#4285f4"/></svg></div>
  <div class="app mat"><svg width="24" height="22" viewBox="0 0 24 22"><path d="M0 13l7-3 8-10-4 13-5 4z" fill="#3b78a8"/><path d="M15 0q3 6 9 19-4-4-7-1-3 4-6 4-1-5-4-6 5-4 8-16z" fill="#d4571d"/><path d="M15 0q-1 12-4 22-1-5-4-6 5-4 8-16z" fill="#8c2a17"/><path d="M15 0q2 8 2 18l4-2Q18 6 15 0z" fill="#f2953a"/></svg></div>
  <div class="app steam"><svg width="22" height="22" viewBox="0 0 22 22"><circle cx="11" cy="11" r="11" fill="#14305c"/><path d="M0 13l7 3 5-5 3 1 4-3" fill="none" stroke="#fff" stroke-width="2.500"/><circle cx="14.500" cy="8" r="3.500" fill="#14305c" stroke="#fff" stroke-width="1.800"/><circle cx="7.500" cy="15.500" r="2.800" fill="none" stroke="#fff" stroke-width="1.500"/><circle cx="18.500" cy="19" r="2.800" fill="#f5b90f"/></svg></div>
  <div class="tray">
    <div class="batt">100%</div>
    <svg class="plug" width="10" height="16" viewBox="0 0 10 16"><path d="M2 0v5M8 0v5M5 10v6" stroke="#fff" stroke-width="1.800"/><path d="M0 4.500h10v3q-1 4-5 4t-5-4z" fill="#fff"/></svg>
    <svg class="s1" width="12" height="8" viewBox="0 0 12 8"><path d="M.5 7L6 1.200 11.500 7" fill="none" stroke="#000" stroke-width="1.300"/></svg>
    <svg class="s2" width="12" height="16" viewBox="0 0 12 16"><path d="M3 0h6v10H3z"/><path d="M1 7v3q0 2 2 2h6q2 0 2-2V7M6 12v3M3 15.300h6" fill="none" stroke="#000" stroke-width="1.200"/></svg>
    <svg class="s3" width="16" height="12" viewBox="0 0 16 12"><path d="M5.500 3.500h9v7h-9M5.500 8v2.500" fill="none" stroke="#000"/><path d="M7 5h6.500v4H7zM15 5.500h1v3h-1z"/><path d="M1.500 0v3M4.500 0v3M3 6v2h3" fill="none" stroke="#000"/><path d="M.5 2.500h5v2L3 6.500.5 4.500z"/></svg>
    <svg class="s4" width="16" height="13" viewBox="0 0 16 13"><path d="M6 1.500h9.500v8H4.500V6M7 12.500h6M10 9.500v3M.5.500h4v4h-4zM2.500 4.500v8" fill="none" stroke="#000"/></svg>
    <svg class="s5" width="17" height="14" viewBox="0 0 17 14"><path d="M.5 4.500H3L6.500 1v12L3 9.500H.5z" fill="none" stroke="#000"/><path d="M8.500 5q1.500 2 0 4" fill="none" stroke="#000"/><path d="M10.500 3q3 4 0 8M13 1.500q4.500 5.500 0 11" fill="none" stroke="#888"/></svg>
    <div class="lang">ENG<br>US</div><div class="clock">16:28<br>19-08-2020</div>
    <svg class="s6" width="16" height="16" viewBox="0 0 16 16"><path d="M.7.700h14.600v11h-4.800L8 14.500l-2.500-2.800H.7z" fill="none" stroke="#000" stroke-width="1.300"/></svg>
  </div>
</footer>
</main>
</body>
</html>
```
FILE: styles.css
```css
* { box-sizing: border-box; }
body, h6, ul, hr { margin: 0; padding: 0; }
i { font-style: normal; }
svg { display: block; flex: none; }
.defs { position: absolute; }
body { background: #2b2c2f; font: 12px/16px "Open Sans", sans-serif; color: #111; white-space: nowrap; }
.desktop { display: flex; flex-direction: column; width: 1920px; height: 1080px; overflow: hidden; }
.windows { display: flex; height: 1040px; padding-left: 1px; }

/* browser window */
.chrome { width: 958px; height: 1039px; display: flex; flex-direction: column; border-top: 1px solid #8e6bbf; margin-right: 2px; }
.tabstrip { height: 42px; background: #a6a8b5; display: flex; align-items: flex-end; color: #33353b; letter-spacing: -.24px; }
.tab { height: 34px; display: flex; align-items: center; gap: 8px; }
.t1 { width: 247px; padding-left: 20px; }
.t1 span { letter-spacing: -.16px; }
.t2 { width: 240px; background: #dadbe0; border-radius: 8px 8px 0 0; padding-left: 13px; }
.t2 span { margin-left: 1px; letter-spacing: -.1px; }
.t3 { width: 238px; padding-left: 11px; }
.t3::after { content: ""; width: 1px; height: 20px; background: #6c6e78; margin-left: 2px; }
.tab .close { margin-left: auto; margin-right: 11px; color: #222; --sw: 1.600; }
.tab.t3 .close { margin: 0 0 0 auto; }
.tab .rec { margin-left: auto; }
.tab.t2 .close { margin-left: 3px; }
.newtab { margin: 0 0 11px 16px; }
.winbtns { display: flex; align-items: center; gap: 36px; margin: 0 17px 21px auto; }
.toolbar { height: 37px; background: #dadbe0; border-bottom: 1px solid #8e8f94; display: flex; align-items: center; padding-left: 14px; gap: 16px; }
.omnibox { width: 582px; height: 28px; border-radius: 14px; background: #f5f6f8; display: flex; align-items: center; padding: 0 10px 0 14px; margin-left: -2px; }
.url { font-size: 14px; margin-left: 11px; letter-spacing: -.3px; flex: 1; }
.url i { color: #6b6e73; }
.star { margin-left: 17px; }
.exts { display: flex; align-items: center; gap: 16px; margin-left: -2px; }
.exts svg:nth-child(7) { margin-left: -4px; }
.exts svg:nth-child(8) { margin-left: 4px; }
.abp { font: 700 7px "Liberation Sans", sans-serif; fill: #fff; }

.meet { display: flex; height: 959px; font-family: Roboto, sans-serif; }
.stage { width: 638px; display: flex; flex-direction: column; }
.video { height: 871px; background: #111; display: flex; flex-direction: column; align-items: center; padding-top: 6px; }
.caption { align-self: flex-start; height: 36px; display: flex; align-items: center; color: #fff; font-size: 18px; font-weight: 500; padding-left: 6px; letter-spacing: -.05px; }
.recbadge { width: 73px; height: 36px; border-radius: 4px; background: #b32922; display: flex; align-items: center; font-size: 16px; padding-left: 11px; }
.recbadge b { width: 14px; height: 14px; border-radius: 50%; background: #fff; margin-right: 7px; }
.initial { width: 36px; height: 36px; border-radius: 50%; background: #5d4037; margin: 0 16px 0 22px; line-height: 36px; text-align: center; font-weight: 400; font-size: 20px; }
.bigavatar { position: relative; width: 160px; height: 160px; border-radius: 50%; background: #ef6c00; margin-top: 382px; }
.bigavatar > * { position: absolute; }
.letter { left: 0; width: 160px; text-align: center; top: 22px; font-size: 90px; line-height: 100px; color: #fff; }
.letter.over { color: #8b8f93; font-size: 84px; top: 22px; left: -1px; }
.shade { left: 58px; top: 57px; width: 44px; height: 44px; border-radius: 50%; background: rgba(115,75,40,.88); }
.bigpin { left: 73px; top: 70px; color: #86b89c; }
.controls { height: 88px; background: #fff; display: flex; align-items: center; padding-left: 37px; color: #3c4043; font-size: 14px; line-height: 18px; }
.round { width: 56px; height: 56px; border-radius: 50%; display: grid; place-items: center; margin-right: 16px; color: #fff; }
.red { background: #d93025; }
.hang { border: 1px solid #dadce0; }
.action { display: flex; flex-direction: column; align-items: center; text-align: center; }
.cc { width: 124px; margin-left: 30px; gap: 8px; padding-top: 1px; }
.pr { width: 120px; margin-left: 36px; gap: 6px; letter-spacing: -.1px; }
.more { margin-left: 43px; fill: #3c4043; }
.panel { width: 320px; background: #fff; position: relative; color: #5f6368; }
.ptitle { height: 64px; display: flex; align-items: center; justify-content: space-between; padding: 0 19px 0 24px; font-size: 18px; letter-spacing: .1px; }
.ptitle svg { color: #5f6368; --sw: 1.200; }
.ptabs { height: 51px; border-bottom: 1px solid #e8eaed; display: flex; font-size: 14px; font-weight: 500; letter-spacing: .3px; padding-left: 31px; }
.pt { display: flex; align-items: center; gap: 6px; height: 50px; padding-top: 2px; }
.on.pt { color: #00796b; width: 98px; border-bottom: 3px solid #00796b; justify-content: center; padding-left: 2px; }
.pt.chat { margin-left: 80px; gap: 8px; padding-top: 0; }
.add { height: 51px; border-bottom: 1px solid #dadce0; margin-right: 8px; display: flex; align-items: center; padding: 0 0 2px 25px; gap: 5px; font-size: 14px; font-weight: 500; letter-spacing: .6px; }
.people { list-style: none; height: 793px; background: linear-gradient(90deg, #f1f3f4 92px, #fff 92px); }
.people li { height: 56px; display: flex; align-items: center; padding-left: 32px; font-size: 13px; color: #3c4043; }
.people b { width: 36px; height: 36px; border-radius: 50%; color: #fff; font-weight: 400; font-size: 20px; line-height: 38px; text-align: center; }
.people li > i { width: 26px; height: 26px; border-radius: 50%; background: #d93025; color: #fff; display: grid; place-items: center; margin: 20px 0 0 -7px; }
.people span { margin-left: 21px; padding-top: 2px; }
.pinned { background: linear-gradient(90deg, #7d8084 92px, #fff 92px); }
.c0 { background: #7b6350; display: grid; place-items: center; padding-right: 8px; }
.wide { background: linear-gradient(90deg, #f1f3f4 100px, #fff 100px); }
.people .wide i { margin-left: 1px; }
.violet { background: #7e57c2; } .slate { background: #78909c; } .forest { background: #33691e; } .orange { background: #f4511e; }
.rust { background: #bf360c; } .brown { background: #5d4037; } .purple { background: #ab47bc; } .teal { background: #0097a7; } .lime { background: #689f38; }
.thumb { position: absolute; right: 1px; top: 115px; width: 8px; height: 387px; background: #dadce0; border-radius: 4px; }

/* model windows */
.models { width: 958px; padding-top: 1px; }
.sim { height: 518px; display: flex; flex-direction: column; background: #efefef; margin-bottom: 2px; }
.title { height: 30px; background: #fff; display: flex; align-items: center; padding: 0 17px 0 8px; color: #929292; }
.title span { margin: 0 auto 0 4px; letter-spacing: -.28px; }
.second .title span { letter-spacing: -.33px; }
.simbtns { display: flex; align-items: center; gap: 35px; color: #888; }
.ribbon { height: 28px; background: #003f72; display: flex; align-items: flex-end; padding-left: 3px; color: #fff; }
.ribbon a { width: 106px; line-height: 22px; height: 24px; text-align: center; font-size: 11.500px; letter-spacing: -.3px; font-weight: 600; }
.ribbon a.on { width: 100px; margin-right: 3px; background: #e5e5e5; color: #444; font-weight: 400; }
.quick { width: 139px; height: 22px; margin: 0 10px 3px auto; background: #688cad; display: flex; align-items: center; padding-left: 17px; clip-path: polygon(7px 0, 100% 0, 100% 100%, 7px 100%, 0 50%); gap: 11px; }
.quick .un { color: #bfe0f5; }
.quick .re { color: #83a6c3; transform: scaleX(-1); margin-left: -2px; }
.quick svg:nth-child(4) { margin-left: 1px; }
.strip { height: 93px; background: linear-gradient(90deg, #f0f0f0, #e5e5e5 60px); border-bottom: 1px solid #a3a3a3; display: flex; letter-spacing: -.2px; position: relative; }
.sec { border-right: 1px solid #c6c6c6; display: flex; flex-direction: column; padding-top: 5px; }
.sec h6 { font: 11px/16px "Open Sans", sans-serif; letter-spacing: -.2px; color: #666; text-align: center; }
.in { height: 72px; display: flex; }
.big { display: flex; flex-direction: column; align-items: center; text-align: center; padding-top: 7px; }
.big span { margin-top: 8px; }
.big span svg { display: inline-block; vertical-align: 2px; margin-left: 3px; }
.dim { color: #a0a0a0; }
.file { width: 127px; } .lib { width: 60px; } .prep { width: 206px; } .simu { width: 367px; } .rev { width: 118px; }
.new { width: 40px; }
.new > svg:last-child, .cc2 { margin-top: 6px; }
.rows { width: 86px; padding-left: 3px; }
.rows div { height: 24px; display: flex; align-items: center; gap: 6px; }
.rows .c { margin: 0 13px 0 auto; }
.rows .far { margin-right: 9px; }
.gal { height: 68px; margin: 1px 0 0 3px; border: 1px solid #b9b9b9; border-radius: 4px; background: #ededed; display: flex; }
.lib .big { width: 60px; }
.gal .big span { margin-top: 0; padding-top: 1px; }
.prep .big { width: 84px; } .prep .big:first-child { margin-left: 5px; } .prep .big:nth-child(2) { margin-right: 5px; }
.drop { border-left: 1px solid #b9b9b9; width: 19px; display: grid; place-items: center; background: #e8e8e8; }
.prep .gal { width: 199px; } .rev .gal { width: 111px; }
.rev .big { width: 91px; }
.rev .gal .big span { margin-top: 1px; }
.form { width: 136px; padding-left: 3px; }
.st { display: flex; align-items: center; justify-content: space-between; padding-left: 3px; width: 132px; letter-spacing: -.3px; }
.inp { width: 64px; height: 22px; border: 1px solid #999; background: #fff; padding: 2px 5px 0; }
.sel { width: 132px; height: 22px; margin-top: 3px; border: 1px solid #999; border-radius: 4px; background: #f4f4f4; display: flex; align-items: center; justify-content: space-between; padding: 0 8px; }
.fr { display: flex; align-items: center; gap: 5px; height: 27px; padding-left: 3px; letter-spacing: -.35px; }
.simu .big { width: 59px; padding-top: 6px; }
.simu .big span { margin-top: 7px; }
.simu .sb { margin-left: 3px; } .simu .rn { width: 54px; } .simu .sf { width: 64px; } .simu .sp { width: 45px; }
.fold { position: absolute; right: 7px; bottom: 3px; }
.body { height: 346px; display: flex; }
.side { width: 30px; padding: 2px 0 0 2px; }
.left { border-right: 1px solid #b5b5b5; height: 346px; }
.right { border-left: 1px solid #b5b5b5; padding: 2px 0 0 7px; width: 31px; margin-left: 2px; height: 346px; }
.vtab { writing-mode: vertical-rl; width: 22px; height: 94px; background: #fff; border: 1px solid #d0d0d0; text-align: center; line-height: 20px; font-size: 11.500px; letter-spacing: -.45px; }
.up { transform: rotate(180deg); letter-spacing: -.6px; }
.right .vtab { height: 113px; }
.editor { width: 894px; padding-left: 2px; }
.doctabs { height: 26px; border-bottom: 1px solid #9a9da6; display: flex; align-items: flex-end; }
.nav { width: 93px; height: 25px; display: flex; align-items: center; gap: 12px; padding: 5px 0 0 6px; }
.flip { transform: scaleX(-1); }
.upw { transform: rotate(90deg); }
.doc { height: 24px; margin-bottom: -1px; padding: 5px 11px 0 10px; background: #fff; border: 1px solid #d0d0d0; border-bottom: 0; letter-spacing: -.5px; }
.long { font-size: 11.500px; letter-spacing: -.7px; }
.work { display: flex; height: 320px; }
.palette { width: 32px; display: flex; flex-direction: column; align-items: center; gap: 12px; padding-top: 8px; }
.palette hr { width: 19px; border: 0; border-top: 1px solid #999; margin: -3px 0 -1px; }
.palette .gap { margin-bottom: 25px; }
.view { width: 860px; height: 318px; border: 1px solid #85878f; border-top-width: 2px; background: #fff; }
.crumb { height: 30px; border-bottom: 2px solid #85878f; display: flex; align-items: center; letter-spacing: -.4px; padding: 0 5px 0 2px; gap: 2px; }
.ic { width: 16px; height: 16px; border: 1px solid #999; display: grid; place-items: center; background: #f4f4f4; }
.cr { margin-left: auto; }
.canvas { font: 8px "Liberation Sans", sans-serif; fill: #111; }
.k { fill: none; stroke: #111; stroke-width: 1; }
.kf { fill: #000; }
.b { fill: none; stroke: #444; stroke-width: 1.300; }
.g { fill: none; stroke: #2dd45c; stroke-width: 1.300; }
.thick { stroke-width: 2; }
.gb { fill: none; stroke: #5adf80; stroke-width: 1.700; }
.gf { fill: #2dd45c; }
.m { fill: none; stroke: #9c666a; stroke-width: 1.200; }
.mb { fill: none; stroke: #b08a8d; stroke-width: 1.500; }
.o { fill: #fff; stroke: #333; stroke-width: .9; }
.u { fill: none; stroke: #3a6ec8; stroke-width: 1.300; }
.t { fill: #35504a; }
.fcn { fill: #9c666a; }
.status { height: 21px; display: flex; align-items: center; padding: 2px 7px 0 6px; letter-spacing: -.2px; background: linear-gradient(#efefef, #e6e6e6); }
.link { color: #2a2a9c; }
.warn { margin-left: 431px; letter-spacing: -.3px; }
.pct { margin-left: 141px; letter-spacing: -.4px; }
.second .pct { margin-left: 441px; }
.solver { margin: 0 9px 0 auto; letter-spacing: -.25px; }
.grip { width: 7px; height: 7px; margin-left: 4px; background: radial-gradient(#aaa 1px, transparent 1px) 0 0/3px 3px; }

/* taskbar */
.taskbar { height: 40px; background: linear-gradient(90deg, #d2d2d4, #d9d9da 45%, #dfe3e3 78%, #d8d8d6); display: flex; font-size: 12px; line-height: 18px; }
.app { width: 48px; display: grid; place-items: center; }
.open { margin-left: 3px; background: #efefef; border-bottom: 2px solid #8764b8; }
.mat { width: 40px; margin-left: 5px; border-bottom: 2px solid #8764b8; }
.steam { margin-left: 5px; background: #f9a563; border-bottom: 2px solid #ff7800; }
.tray { margin-left: auto; display: flex; align-items: center; letter-spacing: -.35px; text-align: center; border-right: 1px solid #aaa; margin-right: 4px; }
.batt { width: 49px; height: 20px; border: 2px solid #fff; background: #17984a; color: #fff; font-size: 13.500px; line-height: 16px; margin-right: 1px; }
.plug { margin-left: 7px; } .s1 { margin-left: 11px; } .s2 { margin-left: 12px; } .s3 { margin-left: 11px; } .s4 { margin-left: 8px; } .s5 { margin-left: 8px; }
.lang { width: 30px; margin-left: 6px; }
.clock { width: 66px; margin-left: 5px; }
.s6 { margin: 0 20px 0 14px; }
```
